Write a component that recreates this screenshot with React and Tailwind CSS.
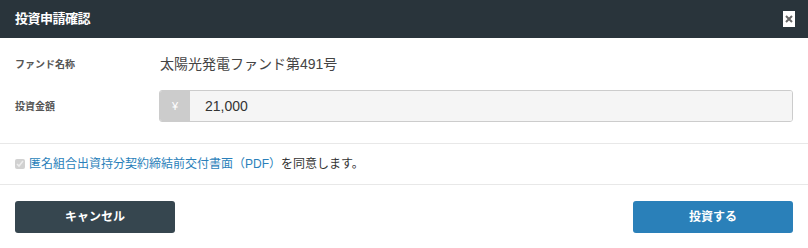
const App = () => {
  return (
    <div
      className="w-[808px] h-[248px] bg-white overflow-hidden"
      style={{ fontFamily: '"Liberation Sans", "Noto Sans CJK JP", sans-serif' }}
    >
      {/* header */}
      <div className="h-[38px] bg-[#29343b] flex items-center justify-between pl-[15px] pr-[13px]">
        <h2 className="text-white text-[13px] font-bold tracking-[-0.5px]">投資申請確認</h2>
        <button className="w-[12px] h-[16px] bg-white flex items-center justify-center">
          <svg width="8" height="8" viewBox="0 0 8 8">
            <path d="M1 1 L7 7 M7 1 L1 7" stroke="#666" strokeWidth="2" />
          </svg>
        </button>
      </div>

      {/* body */}
      <div className="px-[15px] pt-[16px] pb-[20px]">
        <div className="flex items-center h-[20px]">
          <div className="w-[145px] text-[10px] font-bold text-[#555]">ファンド名称</div>
          <div className="text-[14px] text-[#444]">太陽光発電ファンド第491号</div>
        </div>
        <div className="flex items-center mt-[16px]">
          <div className="w-[144px] text-[10px] font-bold text-[#555]">投資金額</div>
          <div className="flex-1 flex h-[32px] rounded-[3px] border border-[#ccc] overflow-hidden">
            <span className="w-[30px] bg-[#ccc] text-white text-[11px] flex items-center justify-center">¥</span>
            <input
              className="flex-1 bg-[#f5f5f5] pl-[15px] text-[14px] text-[#333] outline-none"
              defaultValue="21,000"
              readOnly
            />
          </div>
        </div>
      </div>

      {/* agreement */}
      <div className="border-t border-b border-[#e8e8e8] h-[42px] flex items-center px-[15px] mt-[1px]">
        <input type="checkbox" defaultChecked disabled className="w-[10px] h-[10px] mr-[4px]" />
        <span className="text-[12px] text-[#333]">
          <a className="text-[#2a7fba]" href="#">匿名組合出資持分契約締結前交付書面（PDF）</a>
          を同意します。
        </span>
      </div>

      {/* footer */}
      <div className="flex justify-between px-[15px] pt-[16px]">
        <button className="w-[160px] h-[32px] rounded-[3px] bg-[#36464f] text-white text-[12px] font-bold">
          キャンセル
        </button>
        <button className="w-[160px] h-[32px] rounded-[3px] bg-[#2a80b9] text-white text-[12px] font-bold">
          投資する
        </button>
      </div>
    </div>
  );
};

export default App;
